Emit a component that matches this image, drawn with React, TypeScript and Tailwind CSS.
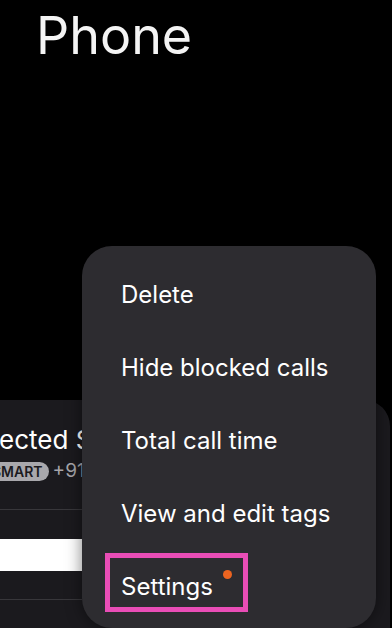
import React from "react";

const menuItems = ["Delete", "Hide blocked calls", "Total call time", "View and edit tags"];

function MoreMenu() {
  return (
    <div className="absolute left-[82px] top-[246px] h-[382px] w-[294px] rounded-[30px] bg-[#2d2c30] pt-[12px] shadow-[0_0_16px_rgba(0,0,0,0.5)]">
      {menuItems.map((label) => (
        <div key={label} className="flex h-[73px] items-center pl-[39px] text-[24px] text-white">
          {label}
        </div>
      ))}
      <div className="relative flex h-[73px] items-center pl-[39px] text-[24px] text-white">
        Settings
        {/* highlight box around the settings entry */}
        <span className="absolute left-[23px] top-[3px] h-[59px] w-[143px] border-[5px] border-[#e94db6]" />
        <span className="absolute left-[141px] top-[20px] h-[9px] w-[9px] rounded-full bg-[#ec6420]" />
      </div>
    </div>
  );
}

export default function App() {
  return (
    <div
      className="relative h-[628px] w-[392px] overflow-hidden bg-black"
      style={{ fontFamily: "Inter, 'Noto Sans', sans-serif" }}
    >
      <h1 className="pl-[36px] pt-[6px] text-[52px] font-normal leading-[60px] text-[#f4f4f4]">Phone</h1>

      {/* call log card behind the menu */}
      <div className="ml-[-30px] mr-[2px] mt-[334px] h-[260px] rounded-[26px] bg-[#1b1a1e] pt-[24px]">
        <div className="w-[112px] overflow-hidden whitespace-nowrap pl-[29px] text-[26px] leading-[32px] text-white">
          ected S
        </div>
        <div className="mt-[5px] flex w-[112px] items-center gap-[4px] overflow-hidden whitespace-nowrap pl-[16px]">
          <span className="rounded-full bg-[#a9a8ac] px-[6px] text-[14px] font-semibold leading-[19px] text-[#1b1a1e]">
            SMART
          </span>
          <span className="text-[19px] leading-[20px] text-[#a6a5a9]">+91</span>
        </div>
        <div className="mt-[28px] h-px w-[112px] bg-[#38373b]" />
        <div className="mt-[29px] h-[32px] w-[112px] bg-white" />
        <div className="mt-[28px] h-px w-[112px] bg-[#38373b]" />
      </div>

      <MoreMenu />
    </div>
  );
}
